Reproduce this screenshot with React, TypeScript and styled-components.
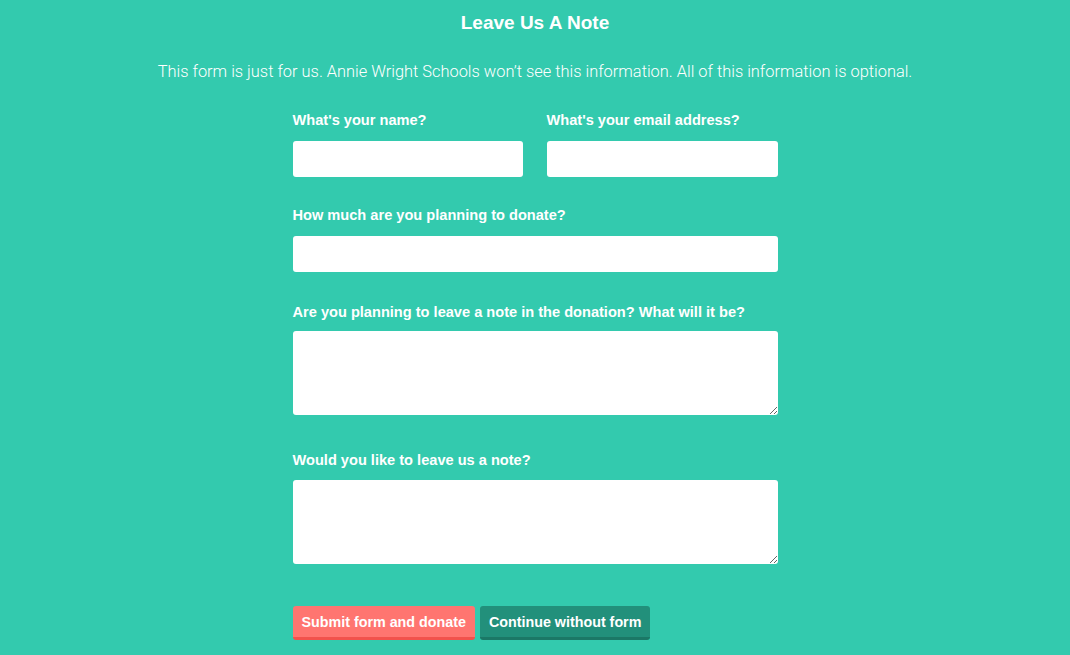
import React from "react";
import styled, { createGlobalStyle } from "styled-components";

const Global = createGlobalStyle`
  html, body { margin: 0; padding: 0; background: #33caae; }
  body { font-family: "Liberation Sans", Arial, sans-serif; color: #fff; }
  * { box-sizing: border-box; }
`;

const Page = styled.main`
  display: flex;
  flex-direction: column;
  align-items: center;
  min-height: 655px;
  background: #33caae;
`;

const Title = styled.h1`
  margin: 11px 0 0;
  font-size: 19px;
  line-height: 24px;
  font-weight: 700;
`;

const Intro = styled.p`
  margin: 26px 0 0;
  font-family: Roboto, "Liberation Sans", Arial, sans-serif;
  font-size: 16.4px;
  line-height: 22px;
  font-weight: 300;
`;

const Form = styled.form`
  width: 485px;
  display: flex;
  flex-direction: column;
`;

const Row = styled.div`
  display: grid;
  grid-template-columns: 230px 231px;
  column-gap: 24px;
`;

const Field = styled.div<{ $gap: number }>`
  display: flex;
  flex-direction: column;
  margin-top: ${(p) => p.$gap}px;
`;

const Label = styled.label<{ $space?: number }>`
  font-size: 14.6px;
  line-height: 18px;
  font-weight: 700;
  margin-bottom: ${(p) => p.$space ?? 12}px;
`;

const Input = styled.input`
  height: 36px;
  width: 100%;
  border: none;
  border-radius: 3px;
  background: #fff;
  padding: 6px 10px;
  font: inherit;
  outline: none;
`;

const TextArea = styled.textarea`
  display: block;
  height: 84px;
  width: 100%;
  border: none;
  border-radius: 3px;
  background: #fff;
  padding: 6px 10px;
  font: inherit;
  outline: none;
`;

const Buttons = styled.div`
  display: flex;
  gap: 5px;
  margin-top: 42px;
`;

const Button = styled.button<{ $bg: string; $shade: string }>`
  height: 34px;
  padding: 1px 9px 0;
  border: none;
  border-bottom: 3px solid ${(p) => p.$shade};
  border-radius: 3px;
  background: ${(p) => p.$bg};
  color: #fff;
  font-family: "Liberation Sans", Arial, sans-serif;
  font-size: 14.3px;
  font-weight: 700;
  cursor: pointer;
`;

export default function App() {
  return (
    <>
      <Global />
      <Page>
        <Title>Leave Us A Note</Title>
        <Intro>
          This form is just for us. Annie Wright Schools won’t see this information. All of this information is optional.
        </Intro>
        <Form onSubmit={(e) => e.preventDefault()}>
          <Row>
            <Field $gap={28}>
              <Label>What's your name?</Label>
              <Input type="text" />
            </Field>
            <Field $gap={28}>
              <Label>What's your email address?</Label>
              <Input type="email" />
            </Field>
          </Row>
          <Field $gap={29}>
            <Label>How much are you planning to donate?</Label>
            <Input type="text" />
          </Field>
          <Field $gap={31}>
            <Label $space={10}>Are you planning to leave a note in the donation? What will it be?</Label>
            <TextArea />
          </Field>
          <Field $gap={36}>
            <Label $space={11}>Would you like to leave us a note?</Label>
            <TextArea />
          </Field>
          <Buttons>
            <Button type="submit" $bg="#ff7570" $shade="#f2524c">Submit form and donate</Button>
            <Button type="button" $bg="#22907b" $shade="#1b7866">Continue without form</Button>
          </Buttons>
        </Form>
      </Page>
    </>
  );
}
